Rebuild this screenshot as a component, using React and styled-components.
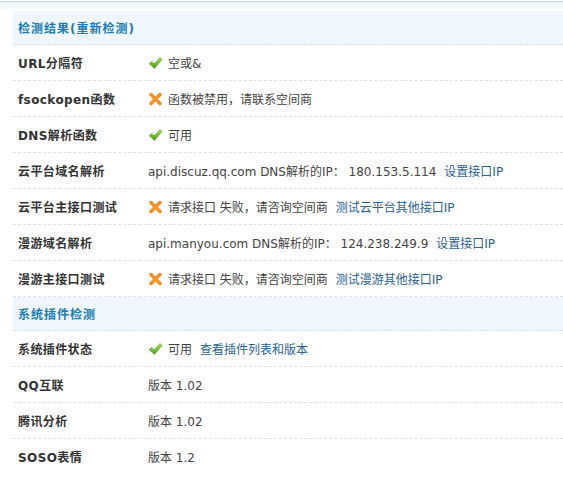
import styled, { createGlobalStyle } from 'styled-components'

const GlobalStyle = createGlobalStyle`
  html, body {
    margin: 0;
    padding: 0;
    background: #fff;
  }
  body {
    font-family: "DejaVu Sans", "Noto Sans CJK SC", sans-serif;
    font-size: 12px;
    color: #333;
  }
`

const colors = {
  title: '#1b7db3',
  text: '#444',
  label: '#333',
  link: '#2b6291',
  line: '#d9e2e8',
  headerBg: '#eff6fc',
}

const Frame = styled.div`
  margin-top: 1px;
  border-top: 1px solid #c3d6e0;
  background: linear-gradient(#eaf2f7, #fff 9px);
  padding: 9px 0 0 13px;
  height: 476px;
  box-sizing: border-box;
`

const Table = styled.div`
  display: flex;
  flex-direction: column;
`

const Header = styled.div`
  height: 33px;
  display: flex;
  align-items: center;
  padding-left: 5px;
  background: ${colors.headerBg};
  border-bottom: 1px dashed ${colors.line};
  color: ${colors.title};
  font-weight: bold;
  font-size: 12px;
  letter-spacing: 1px;
  font-family: "DejaVu Sans", "Noto Sans CJK SC", sans-serif;
`

const Row = styled.div`
  height: 35px;
  display: grid;
  grid-template-columns: 130px 1fr;
  align-items: center;
  padding-left: 5px;
  border-bottom: 1px dashed ${(p) => (p.$last ? 'transparent' : colors.line)};
`

const Label = styled.div`
  font-weight: bold;
  color: ${colors.label};
  font-family: "DejaVu Sans", "Noto Sans CJK SC", sans-serif;
  font-size: 12px;
  letter-spacing: 0.4px;
  white-space: nowrap;
`

const Value = styled.div`
  display: flex;
  align-items: center;
  gap: 5px;
  color: ${colors.text};
  font-family: "DejaVu Sans", "Noto Sans CJK SC", sans-serif;
  font-size: 12px;
  white-space: nowrap;
`

const Link = styled.a`
  color: ${colors.link};
  text-decoration: none;
  margin-left: 8px;
`

function CheckIcon() {
  return (
    <svg width="15" height="14" viewBox="0 0 15 14">
      <defs>
        <linearGradient id="ck" x1="0" y1="0" x2="0" y2="1">
          <stop offset="0" stopColor="#a4e05c" />
          <stop offset="1" stopColor="#4f9e1e" />
        </linearGradient>
      </defs>
      <path
        d="M1 7.5 L4 5.5 L6 8 L12 1.5 L14 3.5 L6.5 12.5 Z"
        fill="url(#ck)"
        stroke="#5a9e2a"
        strokeWidth="0.6"
        strokeLinejoin="round"
      />
    </svg>
  )
}

function CrossIcon() {
  return (
    <svg width="15" height="14" viewBox="0 0 15 14">
      <path
        d="M3 2.5 L12 11.5 M12 2.5 L3 11.5"
        stroke="#f08a1d"
        strokeWidth="3.4"
        strokeLinecap="round"
      />
      <path
        d="M3.5 3 L11.5 11 M11.5 3 L3.5 11"
        stroke="#f9a944"
        strokeWidth="1"
        strokeLinecap="round"
      />
    </svg>
  )
}

const sections = [
  {
    title: '检测结果(重新检测)',
    rows: [
      { label: 'URL分隔符', icon: 'ok', text: '空或&' },
      { label: 'fsockopen函数', icon: 'no', text: '函数被禁用，请联系空间商' },
      { label: 'DNS解析函数', icon: 'ok', text: '可用' },
      {
        label: '云平台域名解析',
        text: 'api.discuz.qq.com DNS解析的IP： 180.153.5.114',
        link: '设置接口IP',
      },
      {
        label: '云平台主接口测试',
        icon: 'no',
        text: '请求接口 失败，请咨询空间商',
        link: '测试云平台其他接口IP',
      },
      {
        label: '漫游域名解析',
        text: 'api.manyou.com DNS解析的IP： 124.238.249.9',
        link: '设置接口IP',
      },
      {
        label: '漫游主接口测试',
        icon: 'no',
        text: '请求接口 失败，请咨询空间商',
        link: '测试漫游其他接口IP',
      },
    ],
  },
  {
    title: '系统插件检测',
    rows: [
      { label: '系统插件状态', icon: 'ok', text: '可用', link: '查看插件列表和版本' },
      { label: 'QQ互联', text: '版本 1.02' },
      { label: '腾讯分析', text: '版本 1.02' },
      { label: 'SOSO表情', text: '版本 1.2' },
    ],
  },
]

function App() {
  return (
    <>
      <GlobalStyle />
      <Frame>
        <Table>
          {sections.map((section, si) => (
            <div key={section.title}>
              <Header>{section.title}</Header>
              {section.rows.map((row, ri) => (
                <Row
                  key={row.label}
                  $last={si === sections.length - 1 && ri === section.rows.length - 1}
                >
                  <Label>{row.label}</Label>
                  <Value>
                    {row.icon === 'ok' && <CheckIcon />}
                    {row.icon === 'no' && <CrossIcon />}
                    <span>
                      {row.text}
                      {row.link && <Link href="#">{row.link}</Link>}
                    </span>
                  </Value>
                </Row>
              ))}
            </div>
          ))}
        </Table>
      </Frame>
    </>
  )
}

export default App
